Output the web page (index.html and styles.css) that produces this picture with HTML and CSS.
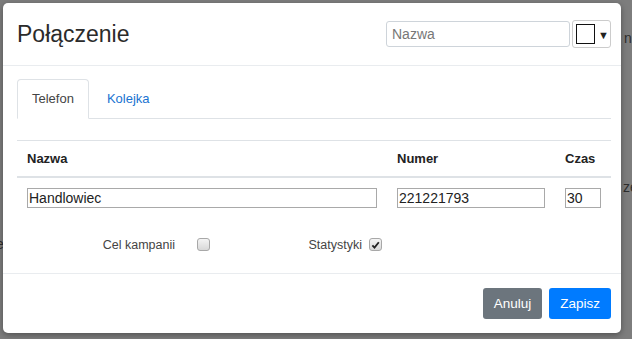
FILE: index.html
```html
<!doctype html>
<html lang="pl">
    <head>
        <meta charset="UTF-8" />
        <title>Połączenie</title>
        <link rel="stylesheet" href="styles.css">
    </head>
    <body>
        <span class="ghost ghost-1">n</span>
        <span class="ghost ghost-2">ze</span>
        <span class="ghost ghost-3">e</span>
        <div class="modal">
            <div class="modal-header">
                <h4 class="modal-title">Połączenie</h4>
                <div class="header-tools">
                    <input class="search" type="text" placeholder="Nazwa" />
                    <button class="color-btn">
                        <span class="swatch"></span>
                        <span class="caret">&#9660;</span>
                    </button>
                </div>
            </div>
            <div class="modal-body">
                <ul class="nav-tabs">
                    <li class="tab active">Telefon</li>
                    <li class="tab">Kolejka</li>
                </ul>
                <table class="grid">
                    <thead>
                        <tr>
                            <th class="col-name">Nazwa</th>
                            <th class="col-number">Numer</th>
                            <th class="col-time">Czas</th>
                        </tr>
                    </thead>
                    <tbody>
                        <tr>
                            <td><input class="cell-input" type="text" value="Handlowiec" /></td>
                            <td><input class="cell-input" type="text" value="221221793" /></td>
                            <td><input class="cell-input" type="text" value="30" /></td>
                        </tr>
                    </tbody>
                </table>
                <div class="options">
                    <span class="opt-label opt-label--first">Cel kampanii</span>
                    <span class="check check--first"></span>
                    <span class="opt-label opt-label--second">Statystyki</span>
                    <span class="check checked">
                        <svg viewBox="0 0 12 12" width="12" height="12">
                            <path d="M2.6 6.4 L4.9 8.8 L9.6 3" fill="none" stroke="#222" stroke-width="2" />
                        </svg>
                    </span>
                </div>
            </div>
            <div class="modal-footer">
                <button class="btn btn-secondary">Anuluj</button>
                <button class="btn btn-primary">Zapisz</button>
            </div>
        </div>
    </body>
</html>
```

FILE: styles.css
```css
* {
    padding: 0;
    margin: 0;
    box-sizing: border-box;
}

body {
    font-family: "Liberation Sans", Arial, sans-serif;
    color: #333;
    background-color: #7d7d7d;
    width: 632px;
    height: 339px;
    overflow: hidden;
    position: relative;
    padding: 3px 11px 0 3px;
}

.ghost {
    position: absolute;
    font-size: 14px;
    color: #2e2e2e;
}

.ghost-1 {
    left: 624px;
    top: 30px;
}

.ghost-2 {
    left: 623px;
    top: 179px;
}

.ghost-3 {
    left: -4px;
    top: 236px;
}

.modal {
    position: relative;
    width: 618px;
    height: 330px;
    background: #fff;
    border-radius: 5px;
    box-shadow: 0 2px 6px rgba(0, 0, 0, 0.35);
    display: flex;
    flex-direction: column;
}

.modal-header {
    height: 63px;
    border-bottom: 1px solid #e9ecef;
    display: flex;
    align-items: center;
    justify-content: space-between;
    padding: 0 10px 0 14px;
}

.modal-title {
    font-size: 23px;
    font-weight: 400;
    color: #2b2b2b;
    margin-top: 1px;
}

.header-tools {
    display: flex;
    align-items: center;
    gap: 2px;
}

.search {
    width: 184px;
    height: 26px;
    border: 1px solid #ced4da;
    border-radius: 3px;
    padding: 0 5px;
    font-family: inherit;
    font-size: 14px;
    color: #333;
    outline: none;
}

.search::placeholder {
    color: #777;
}

.color-btn {
    width: 39px;
    height: 28px;
    background: #fff;
    border: 1px solid #ccc;
    border-radius: 3px;
    display: flex;
    align-items: center;
    padding: 0 0 0 3px;
}

.swatch {
    width: 19px;
    height: 20px;
    border: 1px solid #111;
    background: #fff;
}

.caret {
    font-size: 11px;
    color: #222;
    margin-left: 3px;
    margin-top: 1px;
}

.modal-body {
    height: 208px;
    padding: 13px 10px 0 14px;
    border-bottom: 1px solid #e9ecef;
}

.nav-tabs {
    list-style: none;
    display: flex;
    border-bottom: 1px solid #dee2e6;
}

.tab {
    font-size: 13px;
    line-height: 18px;
    padding: 10px 14px;
    border: 1px solid transparent;
    border-radius: 4px 4px 0 0;
    margin-bottom: -1px;
    color: #1a73d1;
}

.tab + .tab {
    margin-left: 3px;
}

.tab.active {
    color: #444;
    background: #fff;
    border-color: #dee2e6 #dee2e6 #fff;
}

.grid {
    width: 100%;
    margin-top: 21px;
    border-collapse: collapse;
}

.grid th {
    text-align: left;
    font-size: 13px;
    font-weight: 700;
    color: #222;
    height: 36px;
    padding: 0 10px;
    border-top: 1px solid #dee2e6;
    border-bottom: 2px solid #dee2e6;
}

.col-name {
    width: 370px;
}

.col-number {
    width: 168px;
}

.grid td {
    padding: 10px 10px 0;
}

.cell-input {
    width: 100%;
    height: 20px;
    border: 1px solid #a9a9a9;
    padding: 0 1px;
    font-family: inherit;
    font-size: 14px;
    color: #222;
    outline: none;
}

.options {
    display: flex;
    align-items: center;
    margin-top: 30px;
    font-size: 12.5px;
    color: #444;
}

.opt-label--first {
    width: 158px;
    text-align: right;
}

.check {
    width: 13px;
    height: 13px;
    border: 1px solid #a8a8a8;
    border-radius: 3px;
    background: linear-gradient(#f4f4f4, #d8d8d8);
    display: flex;
    align-items: center;
    justify-content: center;
}

.check--first {
    margin-left: 22px;
}

.opt-label--second {
    width: 152px;
    text-align: right;
    margin-right: 7px;
}

.modal-footer {
    display: flex;
    justify-content: flex-end;
    gap: 7px;
    padding: 14px 10px 0;
}

.btn {
    font-family: inherit;
    font-size: 13.5px;
    color: #fff;
    height: 31px;
    padding: 0 11px;
    border: none;
    border-radius: 3px;
}

.btn-secondary {
    background: #6c757d;
}

.btn-primary {
    background: #007bff;
}
```
